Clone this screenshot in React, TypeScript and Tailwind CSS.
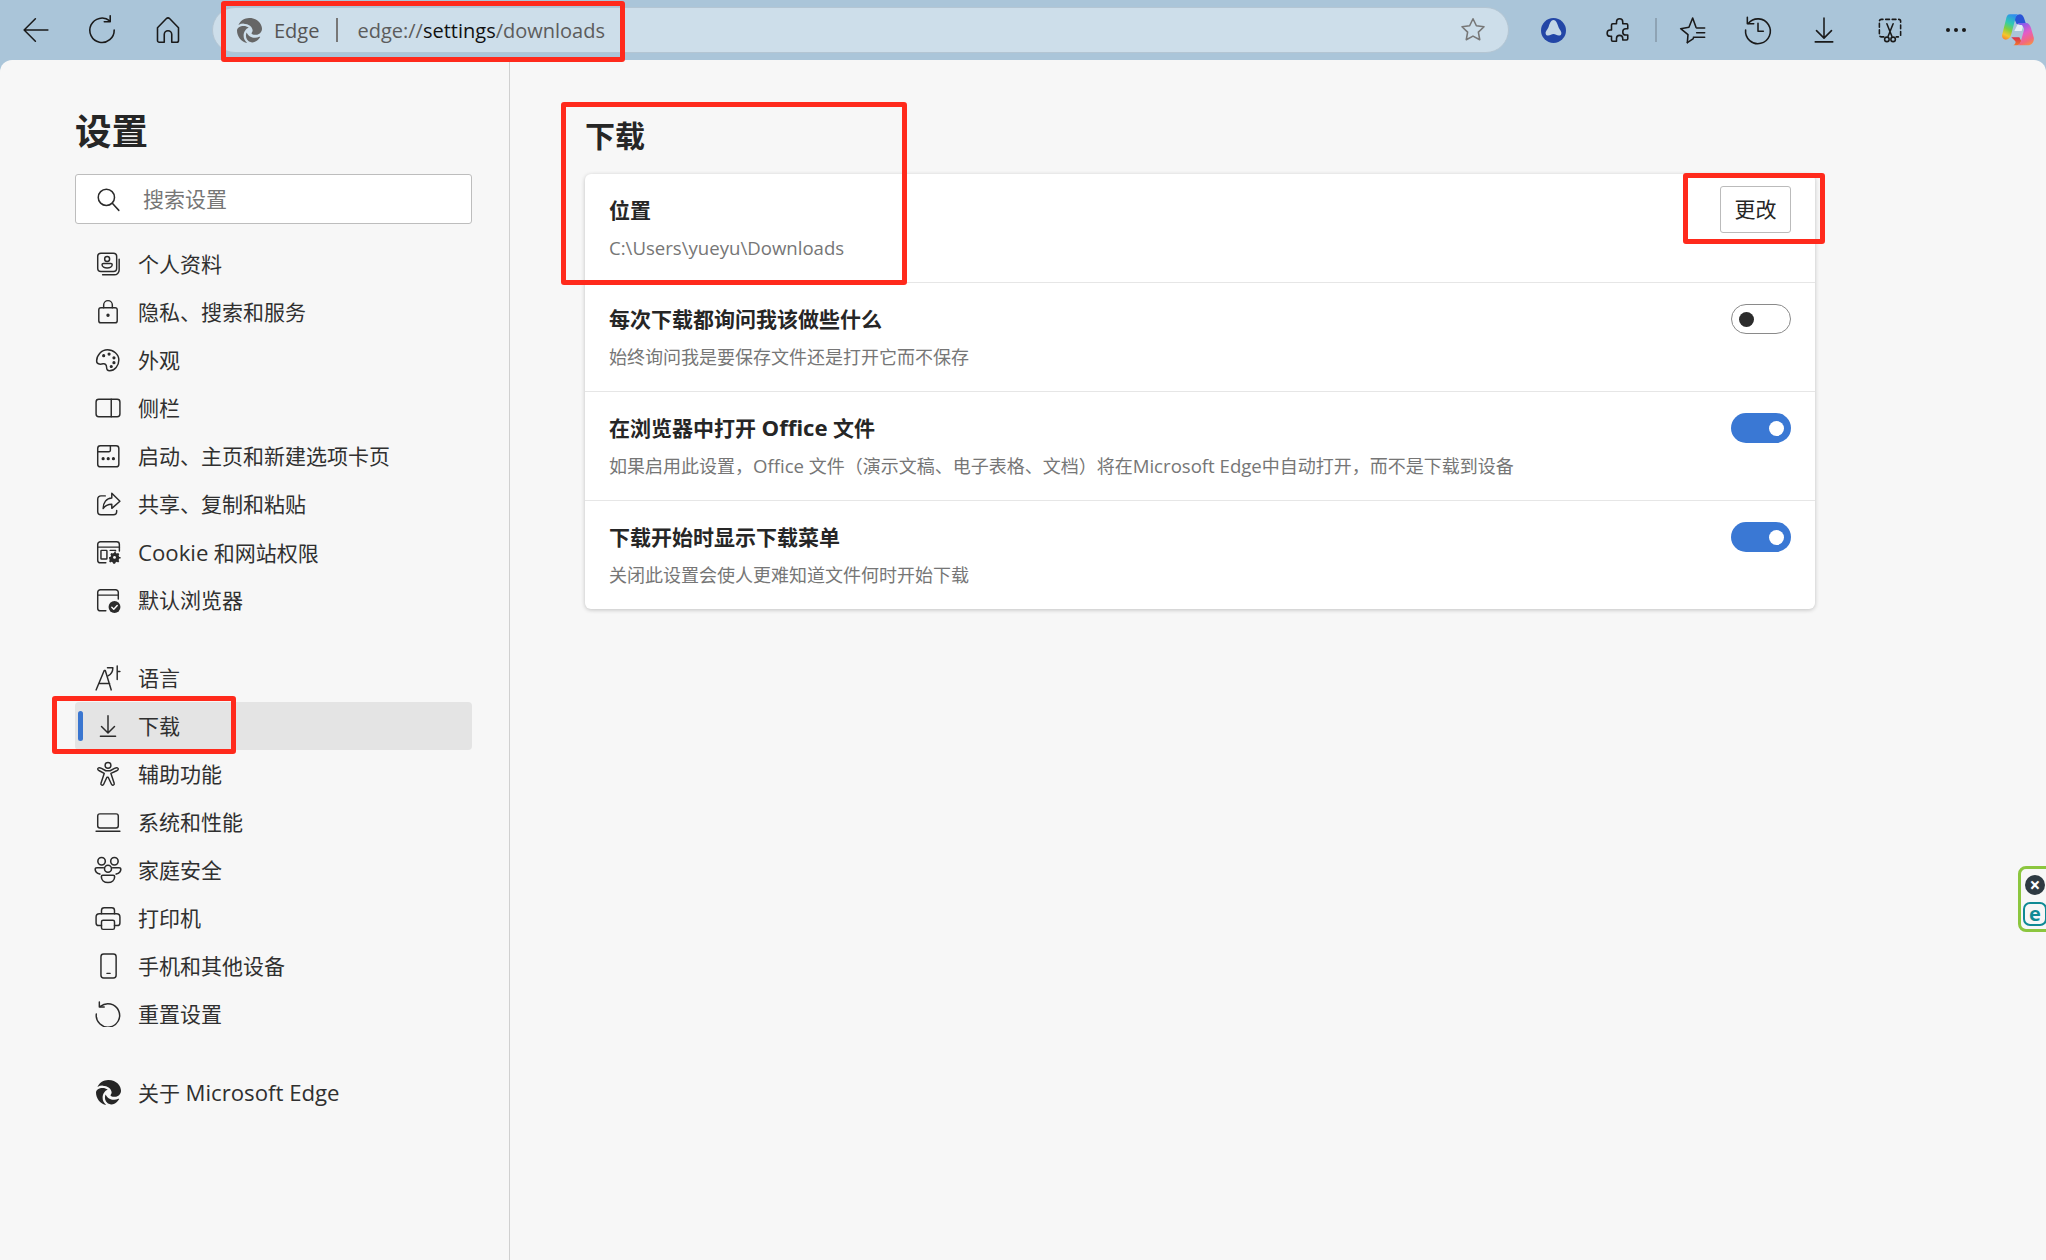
import React from "react";
import { FaEdge } from "react-icons/fa6";

type P = { children: React.ReactNode; s?: number; c?: string; w?: number };
const I = ({ children, s = 26, c = "#2b2b2b", w = 1.35 }: P) => (
  <svg width={s} height={s} viewBox="0 0 24 24" fill="none" stroke={c} strokeWidth={w} strokeLinecap="round" strokeLinejoin="round" className="shrink-0">
    {children}
  </svg>
);

const Back = () => <I s={30} c="#1a1a1a" w={1.25}><path d="M21.500 12H2.500M11.500 3l-9 9 9 9" /></I>;
const Refresh = () => <I s={34} c="#1a1a1a" w={1.1}><path d="M17.500 5.600A8.600 8.600 0 1 0 20.600 12" /><path d="M17.800 2v4.200h-4.200" /></I>;
const Home = () => <I s={36} c="#1a1a1a" w={1.05}><path d="M5 10.500 10.800 4.500a1.700 1.700 0 0 1 2.400 0L19 10.500V19a1.200 1.200 0 0 1-1.200 1.200H14.500V15a2.500 2.500 0 0 0-5 0v5.200H6.200A1.200 1.200 0 0 1 5 19z" /></I>;
const Star = () => <I s={30} c="#777" w={1.25}><path d="m12 3 2.700 5.600 6.100.8-4.500 4.300 1.100 6.100-5.400-2.900-5.400 2.900 1.100-6.100-4.500-4.300 6.100-.8z" /></I>;
const Ext = () => <I s={30} c="#1a1a1a" w={1.25}><path d="M10 5.500a2.500 2.500 0 0 1 5 0V7h3a1 1 0 0 1 1 1v3h-1.500a2.500 2.500 0 0 0 0 5H19v3a1 1 0 0 1-1 1h-3v-1.200a2.500 2.500 0 0 0-5 0V21H7a1 1 0 0 1-1-1v-3H5a2.500 2.500 0 0 1 0-5h1V8a1 1 0 0 1 1-1h3z" /></I>;
const Fav = () => <I s={32} c="#1a1a1a" w={1.17}><path d="M8.500 21.500 9 15.500 3.500 11l6.200-1L12.500 3l2.500 7" /><path d="M15.500 10.500h6M15.500 14h6M13 17.500h8.500M8.500 21.500l4.500-3" /></I>;
const Hist = () => <I s={32} c="#1a1a1a" w={1.17}><path d="M4.800 7A9.300 9.300 0 1 1 2.700 12" /><path d="M4 2.500v4.800h4.800M12 7V13h4" /></I>;
const Dl = ({ s = 30, w = 1.25, c = "#1a1a1a" }: { s?: number; w?: number; c?: string }) => <I s={s} c={c} w={w}><path d="M12 2.500V18M6 12.500l6 6 6-6M5 21.500h14" /></I>;
const Snip = () => <I s={30} c="#1a1a1a" w={1.25}><path d="M7 17.500H5a1.500 1.500 0 0 1-1.500-1.500V5A1.500 1.500 0 0 1 5 3.500h14A1.500 1.500 0 0 1 20.500 5v11a1.500 1.500 0 0 1-1.500 1.500h-2" strokeDasharray="3 2.200" /><path d="m9.500 7 4 10M14.500 7l-4 10" /><circle cx="9.500" cy="19.500" r="1.800" /><circle cx="14.500" cy="19.500" r="1.800" /></I>;

const Profile = () => <I><rect x="2.500" y="2" width="17.500" height="17" rx="3" /><circle cx="11.200" cy="7.300" r="2.300" /><path d="M6.500 12.800c0-.8.6-1.300 1.300-1.300h6.800c.7 0 1.300.5 1.300 1.300 0 1.700-2.200 2.900-4.700 2.900s-4.700-1.200-4.700-2.900z" /><path d="M22.300 7.500V17.500a4.500 4.500 0 0 1-4.500 4.500H7" /></I>;
const Lock = () => <I><rect x="3.500" y="8" width="17" height="14" rx="2" /><path d="M8 8V5.500a4 4 0 0 1 8 0V8" /><circle cx="12" cy="15" r=".9" fill="#2b2b2b" /></I>;
const Palette = () => <I><path d="M11.500 2.500c5.500 0 10.500 4.200 10.500 9.500s-3.800 10-8.500 10c-2.500 0-2.800-1.600-2.800-3.200 0-2.500-1.600-3.800-3.200-3.300-1.700.5-6 1-6-2.500 0-5.500 4.500-10.500 10-10.500z" /><circle cx="8" cy="8" r=".8" fill="#2b2b2b" /><circle cx="13" cy="6.500" r=".8" fill="#2b2b2b" /><circle cx="17.500" cy="10" r=".8" fill="#2b2b2b" /><circle cx="17.500" cy="14.500" r=".8" fill="#2b2b2b" /><circle cx="15" cy="18" r=".8" fill="#2b2b2b" /></I>;
const Side = () => <I><rect x="1" y="4" width="22" height="16" rx="2.500" /><path d="M15 4v16" /></I>;
const Start = () => <I><rect x="2.500" y="2.500" width="19.500" height="19.500" rx="2.500" /><path d="M2.500 8h10.500c.8 0 1.200-.5 1.200-1.200V2.500" /><circle cx="7.500" cy="14.500" r=".8" fill="#2b2b2b" /><circle cx="12.200" cy="14.500" r=".8" fill="#2b2b2b" /><circle cx="17" cy="14.500" r=".8" fill="#2b2b2b" /></I>;
const Share = () => <I><path d="M9.500 4.500H5.500a3 3 0 0 0-3 3v11.500a3 3 0 0 0 3 3h11.500a3 3 0 0 0 3-3V18" /><path d="M15.500 2 23 9.500l-7.500 6.500v-3.800c-3.500 0-6 1-8 4 0-5.500 3-9.500 8-9.700z" /></I>;
const Cookie = () => <I><path d="M10 22H5a2.500 2.500 0 0 1-2.500-2.500V5A2.500 2.500 0 0 1 5 2.500h15A2.500 2.500 0 0 1 22.500 5v6" /><path d="M2.500 7.500h20" /><rect x="5.500" y="10.500" width="5.500" height="8" rx=".6" /><path d="M14 10.500h5" /><path d="M19 12.300l1.100.6 1.300-.5 1 1.100-.6 1.200.6 1.300h1.200v1.600h-1.200l-.6 1.200.6 1.200-1 1.100-1.300-.5-1.100.6-.5 1.200h-1.600l-.5-1.200-1.100-.6-1.300.5-1-1.100.6-1.200-.6-1.200H13v-1.600h1.200l.6-1.300-.6-1.200 1-1.100 1.300.5 1.100-.6.500-1.200h1.600z" fill="#2b2b2b" stroke="none" transform="translate(0 .5)" /><circle cx="18" cy="17" r="1.300" fill="#f7f7f7" stroke="none" /></I>;
const Browser = () => <I><path d="M10 22H5a2.500 2.500 0 0 1-2.500-2.500V5A2.500 2.500 0 0 1 5 2.500h14A2.500 2.500 0 0 1 21.500 5v6" /><path d="M2.500 7.500h19" /><circle cx="18" cy="18.500" r="5.500" fill="#2b2b2b" stroke="none" /><path d="m15.500 18.700 1.800 1.800 3.200-3.500" stroke="#f7f7f7" /></I>;
const Lang = () => <I><path d="M1 23 8.500 5h1l5.500 18M3.500 17h10" /><path d="M11.500 2.500h5c0 3.500-1.500 6-4.500 7.500M20.500 .8v12.500M20.500 6h2.500" /></I>;
const Access = () => <I><circle cx="12" cy="4" r="2.700" /><path d="M3 6.500c-1.200 1 0 2 1 2.500l4.500 2.500-3 9c-.5 1.800 1.800 2.500 2.500 1l3-6.500h1.200l3 6.500c.7 1.500 3 .8 2.500-1l-3-9L20 9c1-.5 2.200-1.500 1-2.500-.8-.7-2-.2-3 .3L14 9h-4L6 6.800c-1-.5-2.200-1-3-.3z" /></I>;
const Laptop = () => <I><rect x="2.500" y="4.500" width="19" height="13" rx="2" /><path d="M1 20.500h22" /></I>;
const Family = () => <I s={28}><circle cx="6.500" cy="4.500" r="3.200" /><circle cx="17.500" cy="4.500" r="3.200" /><circle cx="12" cy="11" r="3" /><path d="M7.500 16.500h9c.8 0 1.200.5 1.200 1.200 0 2.800-2.300 5-5.700 5s-5.700-2.200-5.700-5c0-.7.4-1.200 1.200-1.200z" /><path d="M8 10H2.500c-1 0-1.500.5-1.500 1.200 0 2.200 1.300 3.800 4 4.300M16 10h5.500c1 0 1.500.5 1.500 1.200 0 2.200-1.300 3.800-4 4.300" /></I>;
const Printer = () => <I><path d="M6 8V5a2.500 2.500 0 0 1 2.500-2.500h7A2.500 2.500 0 0 1 18 5v3" /><path d="M6 19H3.500A2.500 2.500 0 0 1 1 16.500V11a3 3 0 0 1 3-3h16a3 3 0 0 1 3 3v5.500a2.500 2.500 0 0 1-2.500 2.500H18" /><rect x="6" y="14" width="12" height="8.500" rx="1.500" /></I>;
const Phone = () => <I><rect x="5.500" y="1" width="14" height="22" rx="2.500" /><path d="M11 18.800h3" /></I>;
const Reset = () => <I><path d="M5 5A10.800 10.800 0 1 1 1.200 12" /><path d="M4 1v4.500h4.500" /></I>;
const Search = () => <I w={1.4}><circle cx="10.500" cy="10.500" r="7.500" /><path d="m16 16 6 6.500" /></I>;

const Copilot = () => (
  <svg width="32" height="32" viewBox="0 0 96 96" className="shrink-0">
    <defs>
      <linearGradient id="cp1" x1="0.6" y1="0" x2="0.3" y2="1"><stop offset="0" stopColor="#2f8fee" /><stop offset=".35" stopColor="#2fcbb0" /><stop offset=".6" stopColor="#7fd03f" /><stop offset=".85" stopColor="#f6c52c" /><stop offset="1" stopColor="#f5922c" /></linearGradient>
      <linearGradient id="cp2" x1="0.3" y1="0" x2="0.7" y2="1"><stop offset="0" stopColor="#7f5cf0" /><stop offset=".45" stopColor="#e45cc8" /><stop offset=".8" stopColor="#f46a78" /><stop offset="1" stopColor="#f5904a" /></linearGradient>
      <linearGradient id="cp3" x1="0" y1="0" x2="0" y2="1"><stop offset="0" stopColor="#d8304c" /><stop offset="1" stopColor="#f2782a" /></linearGradient>
    </defs>
    <path d="M46 3C56-2 62 2 66 12l6 18H44L36 12z" fill="#2a55d6" />
    <path d="M28 70h24l6 12c-3 8-8 12-14 12H34c6-3 8-8 6-12z" fill="url(#cp3)" />
    <path d="M24 1h24c-4 2-6 7-8 13L28 60c-3 11-9 17-17 17C3 77-2 70 1 60L12 16C14 6 17 1 24 1z" fill="url(#cp1)" />
    <path d="M46 27h26c8 0 12 6 15 15l8 28c3 13-6 24-17 24H46c6-2 9-7 11-14l9-32c1-4-1-8-4-10-4-3-9-5-16-11z" fill="url(#cp2)" />
    <path d="M46 33h13c3 2 4 5 3 8l-3 10H37z" fill="#e6eef5" />
  </svg>
);

const Tb = ({ children, w = "w-[66px]" }: { children: React.ReactNode; w?: string }) => (
  <div className={`${w} h-full flex items-center justify-center shrink-0`}>{children}</div>
);

const L = ({ children }: { children: React.ReactNode }) => <span className="text-[22.2px]">{children}</span>;
const D = ({ children }: { children: React.ReactNode }) => <span className="text-[18.6px]">{children}</span>;

const rows1: [React.ReactNode, React.ReactNode][] = [
  ["个人资料", <Profile />],
  ["隐私、搜索和服务", <Lock />],
  ["外观", <Palette />],
  ["侧栏", <Side />],
  ["启动、主页和新建选项卡页", <Start />],
  ["共享、复制和粘贴", <Share />],
  [<><L>Cookie</L> 和网站权限</>, <Cookie />],
  ["默认浏览器", <Browser />],
];
const rows2: [React.ReactNode, React.ReactNode, boolean?][] = [
  ["语言", <Lang />],
  ["下载", <Dl s={26} w={1.35} c="#2b2b2b" />, true],
  ["辅助功能", <Access />],
  ["系统和性能", <Laptop />],
  ["家庭安全", <Family />],
  ["打印机", <Printer />],
  ["手机和其他设备", <Phone />],
  ["重置设置", <Reset />],
];

const Row = ({ label, icon, active }: { label: React.ReactNode; icon: React.ReactNode; active?: boolean }) => (
  <div className={`relative h-12 flex items-center pl-[20px] gap-[17px] rounded-[4px] text-[21px] text-[#303030] ${active ? "bg-[#e4e4e4]" : ""}`}>
    {active && <span className="absolute left-[3px] top-[9px] w-[5px] h-[30px] rounded-full bg-[#3a76d0]" />}
    <span className="w-[26px] flex justify-center">{icon}</span>
    <span className="whitespace-nowrap pt-[2px]">{label}</span>
  </div>
);

const Toggle = ({ on }: { on: boolean }) =>
  on ? (
    <div className="w-[60px] h-[30px] rounded-full bg-[#3a78d4] flex items-center justify-end pr-[7px] shrink-0">
      <span className="w-[15px] h-[15px] rounded-full bg-white" />
    </div>
  ) : (
    <div className="w-[60px] h-[30px] rounded-full border border-[#8a8a8a] bg-white flex items-center pl-[7px] shrink-0">
      <span className="w-[15px] h-[15px] rounded-full bg-[#2b2b2b]" />
    </div>
  );

const Setting = ({ title, desc, control, last }: { title: React.ReactNode; desc: React.ReactNode; control: React.ReactNode; last?: boolean }) => (
  <div className={`px-[24px] flex justify-between items-start ${last ? "h-[108px]" : "h-[109px] border-b border-[#e6e6e6]"}`}>
    <div className="pt-[22px]">
      <div className="text-[21px] leading-[28px] font-bold text-[#262626]">{title}</div>
      <div className="mt-[12px] text-[18px] leading-[24px] text-[#767676]">{desc}</div>
    </div>
    {control}
  </div>
);

const Red = ({ cls }: { cls: string }) => (
  <div className={`absolute border-[5px] border-[#ff2a1c] rounded-[3px] pointer-events-none ${cls}`} />
);

export default function App() {
  return (
    <div
      className="relative w-[2046px] h-[1260px] overflow-hidden bg-[#aac5d9] flex flex-col"
      style={{ fontFamily: '"Open Sans","Noto Sans CJK SC",sans-serif' }}
    >
      <header className="h-[60px] shrink-0 flex items-center pl-[3px]">
        <Tb><Back /></Tb>
        <Tb><Refresh /></Tb>
        <Tb><Home /></Tb>
        <div className="mx-[11px] flex-1 h-[46px] rounded-full bg-[#cddeea] border border-[#b3c5d3] flex items-center pl-[24px] pr-[20px]">
          <FaEdge className="text-[#666] shrink-0" size={25} />
          <span className="ml-[12px] pt-[2px] text-[20px] text-[#555]">Edge</span>
          <span className="ml-[17px] w-[2px] h-[24px] bg-[#777]" />
          <span className="ml-[19px] pt-[2px] text-[20px] text-[#5c5c5c]">
            edge://<span className="text-[#111]">settings</span>/downloads
          </span>
          <span className="ml-auto flex"><Star /></span>
        </div>
        <Tb>
          <svg width="25" height="25" viewBox="0 0 24 24">
            <circle cx="12" cy="12" r="12" fill="#2346a6" />
            <path d="M12 2C14.500 2 15.500 5 16.500 8C17.500 11 20 13 19.500 15C19 17.500 16 17 14.500 16C13 15 11 15 9.500 16C8 17 5 17.500 4.500 15C4 13 6.500 11 7.500 8C8.500 5 9.500 2 12 2Z" fill="#c3d6e6" />
          </svg>
        </Tb>
        <Tb><Ext /></Tb>
        <span className="w-[2px] h-[24px] bg-[#8ea3b4] ml-[3px] mr-[2px] shrink-0" />
        <Tb><Fav /></Tb>
        <Tb><Hist /></Tb>
        <Tb><Dl /></Tb>
        <Tb><Snip /></Tb>
        <Tb>
          <div className="flex gap-[4px]">
            <span className="w-[4px] h-[4px] rounded-full bg-[#1a1a1a]" />
            <span className="w-[4px] h-[4px] rounded-full bg-[#1a1a1a]" />
            <span className="w-[4px] h-[4px] rounded-full bg-[#1a1a1a]" />
          </div>
        </Tb>
        <Tb w="w-[57px]"><Copilot /></Tb>
      </header>

      <div className="flex-1 flex bg-[#f7f7f7] rounded-t-[12px]">
        <aside className="w-[510px] shrink-0 border-r border-[#d0d0d0] pl-[75px] pr-[37px] pt-[49px]">
          <h1 className="text-[36.5px] leading-[44px] font-bold text-[#262626]">设置</h1>
          <div className="mt-[21px] h-[50px] bg-white border border-[#bdbdbd] rounded-[3px] flex items-center pl-[19px] gap-[22px]">
            <Search />
            <span className="pt-[2px] text-[21px] text-[#767676]">搜索设置</span>
          </div>
          <nav className="mt-[16px]">
            {rows1.map(([l, ic], i) => <Row key={i} label={l} icon={ic} />)}
          </nav>
          <nav className="mt-[30px]">
            {rows2.map(([l, ic, a], i) => <Row key={i} label={l} icon={ic} active={a} />)}
          </nav>
          <div className="mt-[30px]">
            <Row label={<>关于 <L>Microsoft Edge</L></>} icon={<FaEdge className="text-[#262626] shrink-0" size={25} />} />
          </div>
        </aside>

        <main className="flex-1 pl-[75px] pt-[56px]">
          <h2 className="text-[30px] leading-[40px] font-bold text-[#262626]">下载</h2>
          <section className="mt-[18px] w-[1230px] bg-white rounded-[6px] shadow-[0_1px_4px_rgba(0,0,0,0.22)]">
            <Setting
              title="位置"
              desc={<D>C:\Users\yueyu\Downloads</D>}
              control={
                <button className="mt-[12px] w-[71px] h-[47px] bg-white border border-[#bbbbbb] rounded-[3px] text-[21px] text-[#262626]">更改</button>
              }
            />
            <Setting title="每次下载都询问我该做些什么" desc="始终询问我是要保存文件还是打开它而不保存" control={<div className="mt-[21px]"><Toggle on={false} /></div>} />
            <Setting title={<>在浏览器中打开 <L>Office</L> 文件</>} desc={<>如果启用此设置，<D>Office</D> 文件（演示文稿、电子表格、文档）将在<D>Microsoft Edge</D>中自动打开，而不是下载到设备</>} control={<div className="mt-[21px]"><Toggle on /></div>} />
            <Setting last title="下载开始时显示下载菜单" desc="关闭此设置会使人更难知道文件何时开始下载" control={<div className="mt-[21px]"><Toggle on /></div>} />
          </section>
        </main>
      </div>

      {/* ESET widget */}
      <div className="absolute left-[2018px] top-[866px] w-[40px] h-[66px] border-[3px] border-[#8cc63f] rounded-[8px] bg-[#f7f7f7] flex flex-col items-start pl-[2px] pt-[6px] gap-[7px]">
        <span className="ml-[2px] w-[20px] h-[20px] rounded-full bg-[#2e3a42] text-white flex items-center justify-center text-[19px] leading-none font-bold">×</span>
        <span className="w-[24px] h-[24px] rounded-[7px] border-[2px] border-[#0f8a94] text-[#0f8a94] flex items-center justify-center text-[20px] leading-none font-bold">e</span>
      </div>

      <Red cls="left-[221px] top-[1px] w-[404px] h-[61px]" />
      <Red cls="left-[561px] top-[102px] w-[346px] h-[183px]" />
      <Red cls="left-[1683px] top-[173px] w-[142px] h-[71px]" />
      <Red cls="left-[52px] top-[696px] w-[184px] h-[58px]" />
    </div>
  );
}
